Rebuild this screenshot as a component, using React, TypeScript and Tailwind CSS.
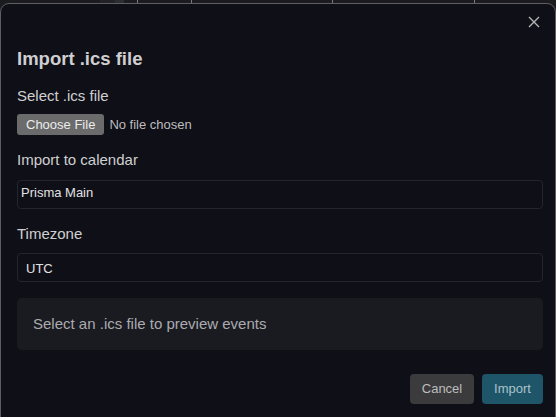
import React from 'react';

const font = { fontFamily: '"Liberation Sans", Arial, sans-serif' };

const ImportIcsModal: React.FC = () => {
  return (
    <div className="relative min-h-[417px] h-[417px] overflow-hidden bg-[#1b1b20]" style={font}>
      {/* calendar grid peeking out behind the dialog */}
      <div className="absolute inset-x-0 top-0 h-4 flex">
        <div className="w-[100px]" />
        <div className="w-[15px] bg-[#222228]" />
        <div className="w-[9px] bg-[#2c2c33]" />
        <div className="w-[13px]" />
        <div className="w-[54px] border-l border-[#7a7a7a]" />
        <div className="w-[141px] border-l border-[#7a7a7a]" />
        <div className="w-[142px] border-l border-[#7a7a7a]" />
        <div className="flex-1 border-l border-[#7a7a7a]" />
      </div>

      <div className="relative mt-[3px] h-[430px] rounded-[9px] border border-[#5e5e62] bg-[#0f0f17] pl-4 pr-3 pt-[9px]">
        <div className="flex h-[18px] items-center justify-end pr-[3px]">
          <button className="text-[#b5b5b5]">
            <svg width="12" height="12" viewBox="0 0 12 12" fill="none" stroke="currentColor" strokeWidth="1.4">
              <path d="M1 1L11 11M11 1L1 11" />
            </svg>
          </button>
        </div>

        <h2 className="mt-4 text-[18.5px] leading-6 font-bold text-[#cfcfd1]">Import .ics file</h2>

        <div className="mt-[15px] text-[15px] leading-5 text-[#cfcfd1]">Select .ics file</div>
        <div className="mt-2 flex items-center gap-[5px]">
          <span className="h-[21px] rounded-[3px] bg-[#6b6b6b] px-[9px] text-[13px] leading-[21px] text-[#ececec]">Choose File</span>
          <span className="text-[13px] text-[#bdbdbd]">No file chosen</span>
        </div>

        <div className="mt-[15px] text-[15px] leading-5 text-[#cfcfd1]">Import to calendar</div>
        <div className="mt-[10px] flex h-[29px] items-center rounded-[4px] border border-[#23262f] bg-[#0f0f17] px-[3px] pb-[3px] text-[13px] text-[#e2e2e4]">
          Prisma Main
        </div>

        <div className="mt-[15px] text-[15px] leading-5 text-[#cfcfd1]">Timezone</div>
        <div className="mt-[9px] flex h-[29px] items-center rounded-[4px] border border-[#23262f] bg-[#0f0f17] px-2 pt-[2px] text-[13px] text-[#e2e2e4]">
          UTC
        </div>

        <div className="mt-4 flex h-[52px] items-center rounded-[5px] bg-[#1a1a21] px-4 text-[15px] text-[#ababb0]">
          Select an .ics file to preview events
        </div>

        <div className="mt-6 flex justify-end gap-2">
          <button className="h-[30px] w-[64px] rounded-[4px] bg-[#3b3b3d] text-[13px] text-[#bdbdbd]">Cancel</button>
          <button className="h-[30px] w-[61px] rounded-[4px] bg-[#1e5568] text-[13px] text-[#aac3cc]">Import</button>
        </div>
      </div>
    </div>
  );
};

export default function App() {
  return <ImportIcsModal />;
}
